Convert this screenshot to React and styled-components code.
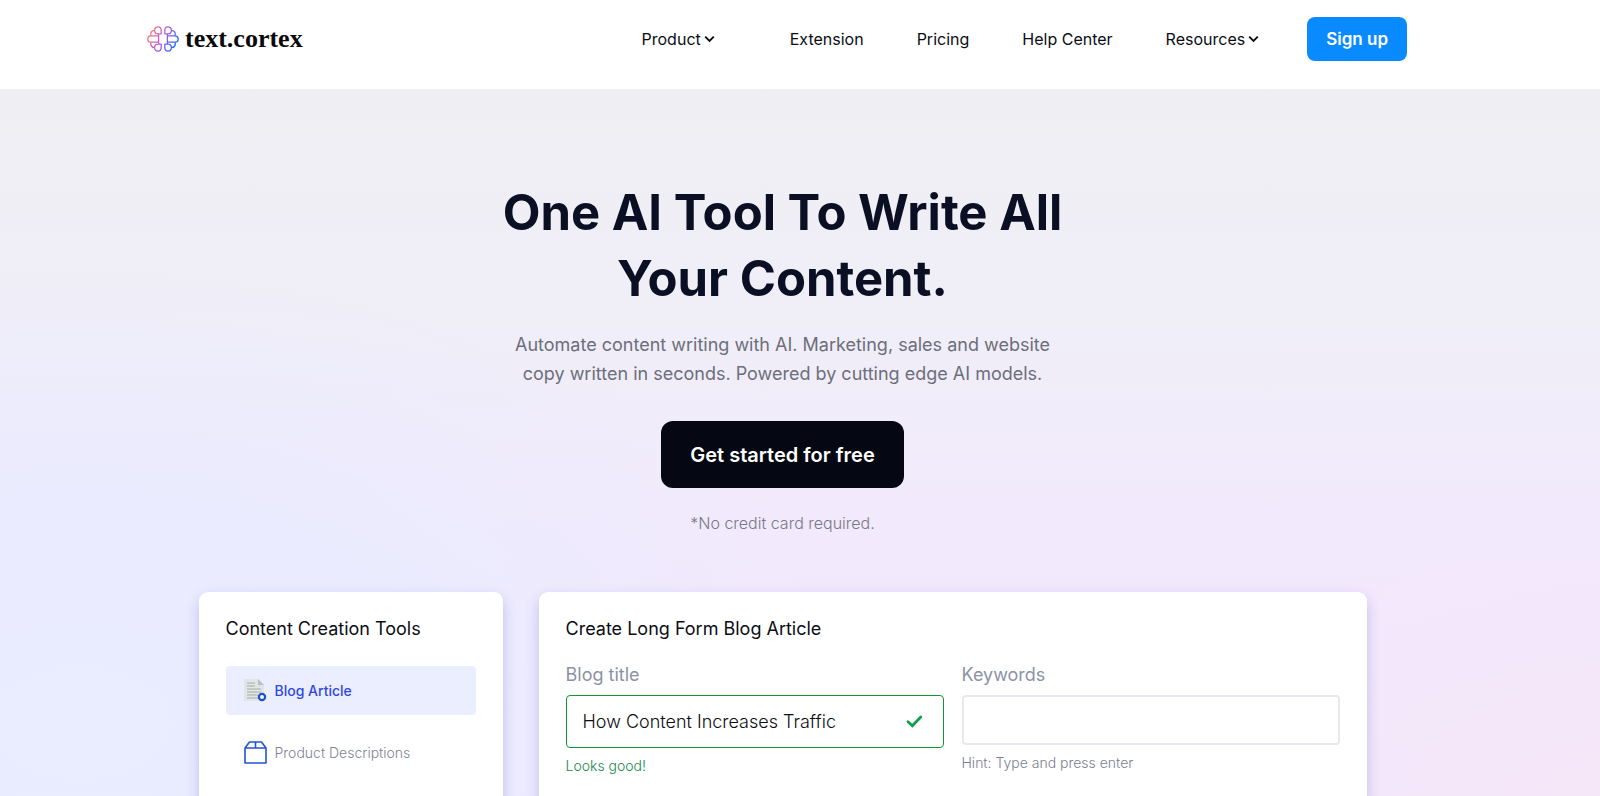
import React, { useState } from "react";
import styled, { createGlobalStyle } from "styled-components";

const GlobalStyle = createGlobalStyle`
  * {
    box-sizing: border-box;
  }
  body {
    margin: 0;
    overflow: hidden;
    background: #fff;
    color: #0b0d14;
    font-family: Inter, "Liberation Sans", sans-serif;
  }
  h1, h2, p, ul {
    margin: 0;
    padding: 0;
  }
  button, input {
    font-family: inherit;
  }
`;

const Page = styled.div`
  min-height: 100vh;
`;

const Header = styled.header`
  display: flex;
  align-items: flex-start;
  justify-content: space-between;
  height: 89px;
  padding: 17px 193px 0 147px;
  background: #fff;
`;

const Brand = styled.a`
  display: flex;
  align-items: center;
  gap: 6px;
  height: 44px;
  color: #0a0a0c;
  font-family: "Liberation Serif", serif;
  font-size: 26px;
  font-weight: 700;
  line-height: 32px;
  text-decoration: none;
`;

const Nav = styled.nav`
  display: flex;
  align-items: center;
  gap: 53px;
`;

const NavLink = styled.a`
  color: #0b0d14;
  font-size: 16px;
  line-height: 24px;
  text-decoration: none;
`;

const MenuButton = styled.button`
  display: flex;
  align-items: center;
  gap: 3px;
  margin-right: ${(props) => (props.$wide ? "22px" : "0")};
  padding: 0;
  border: 0;
  background: none;
  color: #0b0d14;
  font-size: 16px;
  line-height: 24px;
`;

const SignUp = styled.button`
  height: 44px;
  margin-left: -5px;
  padding: 0 19px;
  border: 0;
  border-radius: 8px;
  background: #0a8aff;
  color: #fff;
  font-size: 17px;
  font-weight: 600;
  line-height: 24px;
`;

const Hero = styled.main`
  display: flex;
  flex-direction: column;
  align-items: center;
  height: calc(100vh - 89px);
  overflow: hidden;
  padding: 91px 35px 0 0;
  background:
    radial-gradient(ellipse 48% 66% at 5% 90%, #eaecff 0%, #eaecffd9 50%, #eaecff00 100%),
    radial-gradient(ellipse 28% 36% at 100% 100%, #f6e7f8 0%, #f6e7f800 100%),
    linear-gradient(180deg, #efeff3 0%, #f0eef8 35%, #f2eafc 60%, #f3e8fd 75%, #f1e7fe 100%);

  > * {
    flex: none;
  }
`;

const Title = styled.h1`
  max-width: 640px;
  color: #0a0f24;
  font-size: 49px;
  font-weight: 700;
  line-height: 66px;
  text-align: center;
`;

const Lead = styled.p`
  max-width: 560px;
  margin-top: 18px;
  color: #6c6f7b;
  font-size: 18px;
  line-height: 29px;
  text-align: center;
`;

const CallToAction = styled.button`
  height: 67px;
  margin-top: 33px;
  padding: 0 29px;
  border: 0;
  border-radius: 12px;
  background: #050812;
  color: #fff;
  font-size: 20px;
  font-weight: 600;
`;

const Note = styled.p`
  margin-top: 23px;
  color: #777986;
  font-size: 16px;
  font-weight: 300;
  line-height: 24px;
`;

const Panels = styled.div`
  display: grid;
  grid-template-columns: 304px 1fr;
  gap: 36px;
  width: calc(100% - 397px);
  margin-top: 57px;
`;

const Card = styled.section`
  min-height: 420px;
  padding: 24px 27px;
  border-radius: 9px;
  background: #fff;
  box-shadow: 0 6px 14px #3c46b440;
`;

const CardTitle = styled.h2`
  font-size: 18px;
  font-weight: 400;
  line-height: 26px;
`;

const ToolList = styled.ul`
  display: grid;
  gap: 13px;
  margin-top: 24px;
  list-style: none;
`;

const ToolButton = styled.button`
  display: flex;
  align-items: center;
  gap: 8px;
  width: 100%;
  height: 49px;
  padding: 0 18px;
  border: 0;
  border-radius: 4px;
  background: ${(props) => (props.$active ? "#ebeefe" : "transparent")};
  color: ${(props) => (props.$active ? "#2f48e0" : "#7f8499")};
  font-size: 14px;
  font-weight: ${(props) => (props.$active ? 500 : 300)};
`;

const Fields = styled.form`
  display: grid;
  grid-template-columns: 1fr 1fr;
  align-items: start;
  gap: 18px;
  margin-top: 20px;
`;

const Field = styled.div`
  display: flex;
  flex-direction: column;
`;

const Label = styled.label`
  color: #8c92a6;
  font-size: 18px;
  line-height: 26px;
`;

const InputBox = styled.div`
  display: flex;
  align-items: center;
  height: ${(props) => (props.$valid ? "53px" : "50px")};
  margin-top: 7px;
  padding: 0 20px 0 16px;
  border: ${(props) => (props.$valid ? "1px solid #0f9632" : "2px solid #e7e9ef")};
  border-radius: 4px;
`;

const TextInput = styled.input`
  flex: 1;
  min-width: 0;
  padding: 0;
  border: 0;
  outline: 0;
  background: transparent;
  color: #0b0d14;
  font-size: 18px;
  font-weight: 300;
`;

const Hint = styled.p`
  margin-top: 8px;
  color: ${(props) => (props.$valid ? "#168a4c" : "#7a8095")};
  font-size: 14px;
  font-weight: 300;
  line-height: 20px;
`;

const HALF_LOGO =
  "M14.2 4.4C14.2 2 13 .8 11 .8C9 .8 7.6 2.2 7.6 4.2C7.6 6.2 9 7.8 11 7.8H14.2ZM7.6 4.4C5 4.2 3.2 6.4 3.8 9.8M11.6 9.8H4C2 9.8.8 11.2.8 13S2 16.2 4 16.2H11.6M7.6 21.6C5 21.8 3.2 19.6 3.8 16.2M14.2 21.6C14.2 24 13 25.2 11 25.2C9 25.2 7.6 23.8 7.6 21.8C7.6 19.8 9 18.2 11 18.2H14.2ZM11.6 7.8V18.2";

const Logo = () => (
  <svg width="32" height="26" viewBox="0 0 32 26" fill="none" aria-hidden="true">
    <defs>
      <linearGradient id="logo-left" x1="3" y1="3" x2="29" y2="19" gradientUnits="userSpaceOnUse">
        <stop stopColor="#ff7a66" />
        <stop offset="0.5" stopColor="#b85be6" />
        <stop offset="1" stopColor="#1769ff" />
      </linearGradient>
      <linearGradient id="logo-right" x1="29" y1="3" x2="3" y2="19" gradientUnits="userSpaceOnUse">
        <stop stopColor="#ff7a66" />
        <stop offset="0.5" stopColor="#b85be6" />
        <stop offset="1" stopColor="#1769ff" />
      </linearGradient>
    </defs>
    <g strokeWidth="1.3" strokeLinejoin="round">
      <path d={HALF_LOGO} stroke="url(#logo-left)" />
      <path d={HALF_LOGO} stroke="url(#logo-right)" transform="matrix(-1 0 0 1 32 0)" />
    </g>
  </svg>
);

const Chevron = () => (
  <svg width="11" height="8" viewBox="0 0 11 8" fill="none" aria-hidden="true">
    <path d="M1.2 1.6L5.5 5.9L9.8 1.6" stroke="#0b0d14" strokeWidth="1.9" />
  </svg>
);

const ArticleIcon = () => (
  <svg width="23" height="23" viewBox="0 0 23 23" aria-hidden="true">
    <path d="M0 0H14L20 6V22H0Z" fill="#e2e5e5" />
    <path d="M14 0L20 6H14Z" fill="#b9bfc0" />
    <path d="M3 4H11M3 7H11M3 10H17M3 13H17M3 16H14M3 19H14" stroke="#b9bebe" strokeWidth="1.3" />
    <circle cx="18" cy="18" r="3.1" fill="#fff" stroke="#1f4fd0" strokeWidth="2.2" />
  </svg>
);

const BoxIcon = () => (
  <svg width="23" height="23" viewBox="0 0 23 23" fill="none" aria-hidden="true">
    <path
      d="M1 7V22H22V7L17.5 1H5.5ZM1 7H22M11.5 1V7"
      stroke="#2354d4"
      strokeWidth="1.6"
      strokeLinejoin="round"
    />
  </svg>
);

const Check = () => (
  <svg width="17" height="13" viewBox="0 0 17 13" fill="none" aria-hidden="true">
    <path
      d="M2 6.7L6.3 10.8L14.8 2"
      stroke="#13a04a"
      strokeWidth="2.8"
      strokeLinecap="round"
    />
  </svg>
);

const tools = [
  { name: "Blog Article", Icon: ArticleIcon },
  { name: "Product Descriptions", Icon: BoxIcon },
];

const App = () => {
  const [activeTool, setActiveTool] = useState("Blog Article");
  const [blogTitle, setBlogTitle] = useState("How Content Increases Traffic");
  const [keywords, setKeywords] = useState("");

  return (
    <Page>
      <GlobalStyle />
      <Header>
        <Brand href="#">
          <Logo />
          text.cortex
        </Brand>
        <Nav>
          <MenuButton type="button" $wide>
            Product
            <Chevron />
          </MenuButton>
          <NavLink href="#extension">Extension</NavLink>
          <NavLink href="#pricing">Pricing</NavLink>
          <NavLink href="#help">Help Center</NavLink>
          <MenuButton type="button">
            Resources
            <Chevron />
          </MenuButton>
          <SignUp type="button">Sign up</SignUp>
        </Nav>
      </Header>
      <Hero>
        <Title>
          One AI Tool To Write All
          <br />
          Your Content.
        </Title>
        <Lead>
          Automate content writing with AI. Marketing, sales and website copy
          written in seconds. Powered by cutting edge AI models.
        </Lead>
        <CallToAction type="button">Get started for free</CallToAction>
        <Note>*No credit card required.</Note>
        <Panels>
          <Card>
            <CardTitle>Content Creation Tools</CardTitle>
            <ToolList>
              {tools.map(({ name, Icon }) => (
                <li key={name}>
                  <ToolButton
                    type="button"
                    $active={name === activeTool}
                    onClick={() => setActiveTool(name)}
                  >
                    <Icon />
                    {name}
                  </ToolButton>
                </li>
              ))}
            </ToolList>
          </Card>
          <Card>
            <CardTitle>Create Long Form Blog Article</CardTitle>
            <Fields>
              <Field>
                <Label htmlFor="blog-title">Blog title</Label>
                <InputBox $valid>
                  <TextInput
                    id="blog-title"
                    value={blogTitle}
                    onChange={(e) => setBlogTitle(e.target.value)}
                  />
                  <Check />
                </InputBox>
                <Hint $valid>Looks good!</Hint>
              </Field>
              <Field>
                <Label htmlFor="keywords">Keywords</Label>
                <InputBox>
                  <TextInput
                    id="keywords"
                    value={keywords}
                    onChange={(e) => setKeywords(e.target.value)}
                  />
                </InputBox>
                <Hint>Hint: Type and press enter</Hint>
              </Field>
            </Fields>
          </Card>
        </Panels>
      </Hero>
    </Page>
  );
};

export default App;
